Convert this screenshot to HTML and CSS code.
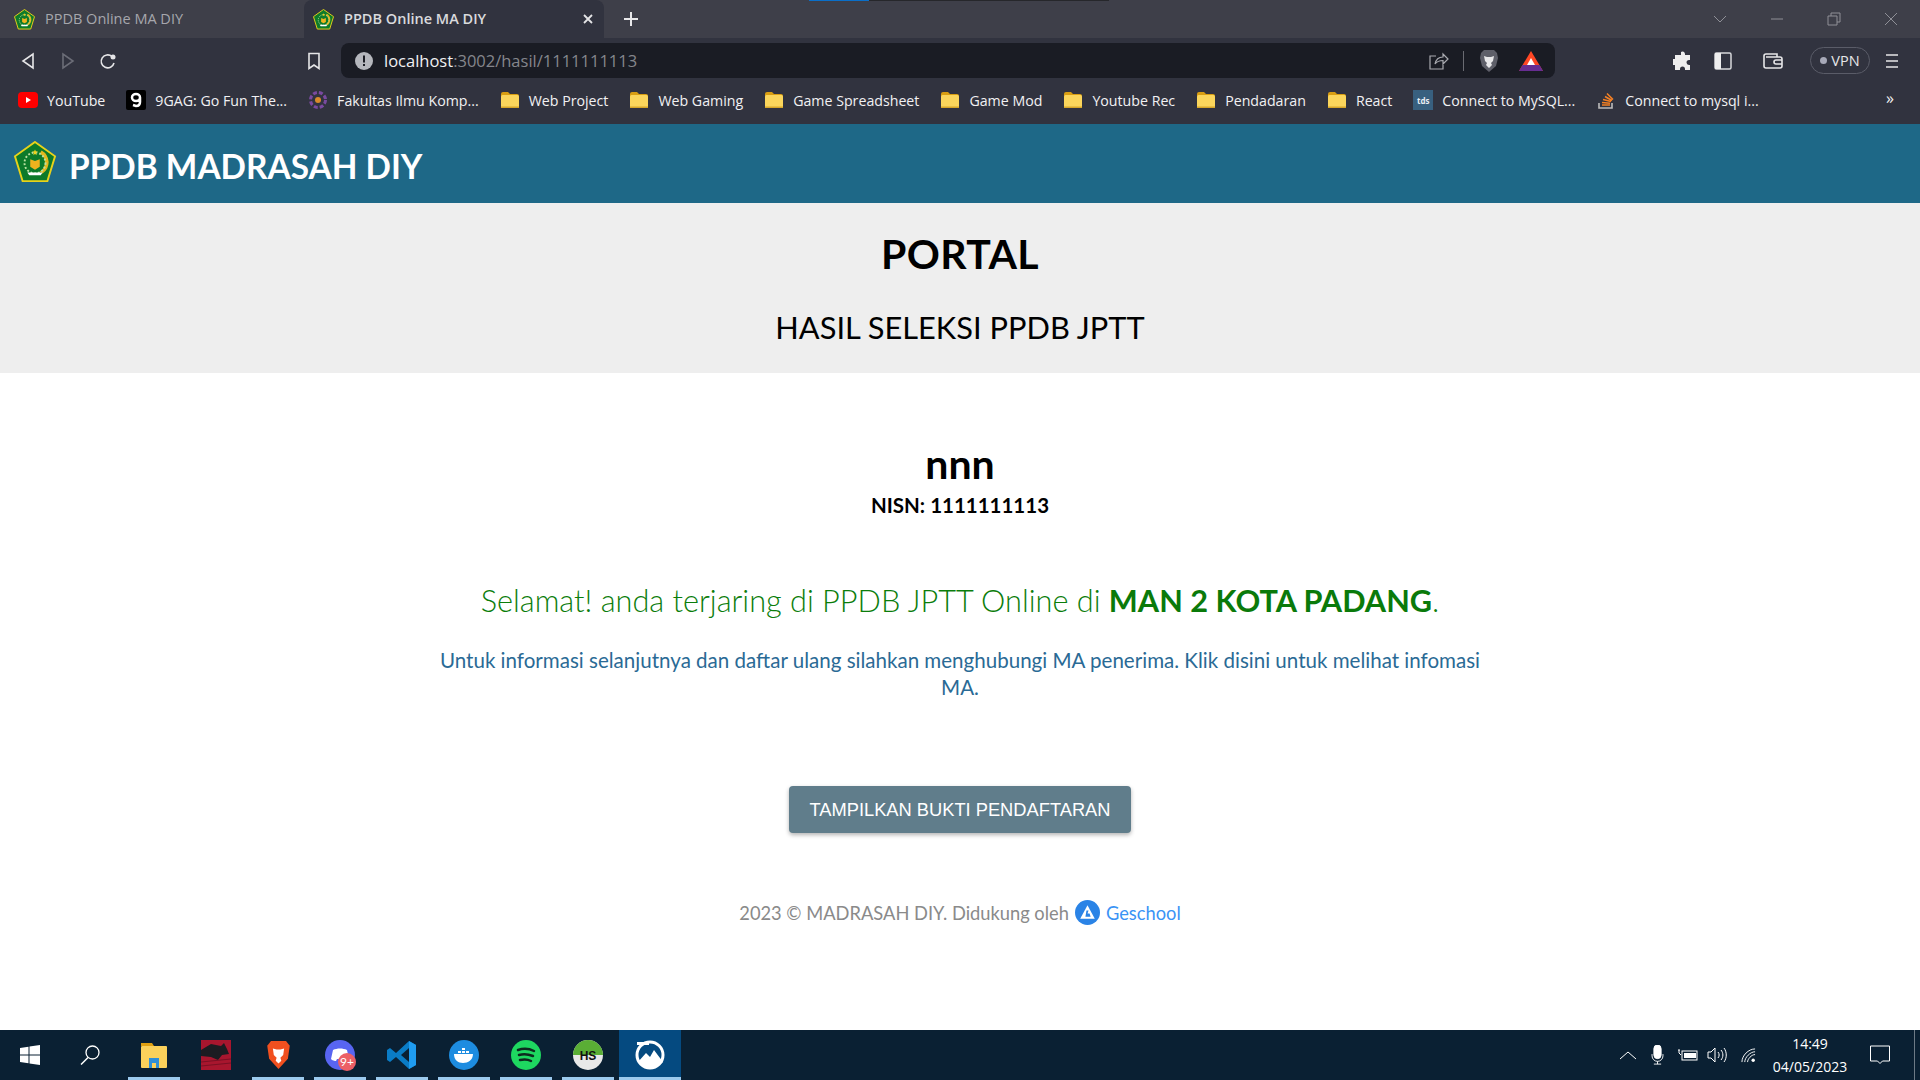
FILE: index.html
```html
<!DOCTYPE html>
<html>
<head>
	<title>PPDB Online MA DIY</title>
	<meta charset="utf-8">
	<link rel="stylesheet" href="styles.css">
</head>
<body>
	<svg class="defs" width="0" height="0">
		<symbol id="kemenag" viewBox="0 0 44 44">
			<path d="M22 1 43 16 35 42H9L1 16Z" fill="#0d7a2a" stroke="#e8d21a" stroke-width="2"/>
			<path d="M29 10a14 14 0 0 1 1 24l-3-2a11 11 0 0 0 0-19Z" fill="#e3b71c"/>
			<circle cx="22" cy="23" r="11" fill="none" stroke="#b9e0a0" stroke-width="2" stroke-dasharray="2 2"/>
			<path d="M17 19l5 2 5-2v8l-5 3-5-3Z" fill="#efb31e"/>
			<path d="M14 33h16l-2 3H16Z" fill="#fff"/>
			<path d="M22 9l1 2h2l-2 1.500 1 2.500-2-1.500-2 1.500 1-2.500-2-1.500h2Z" fill="#f2d21a"/>
		</symbol>
		<symbol id="folder" viewBox="0 0 20 18">
			<path d="M1 3a2 2 0 0 1 2-2h5l2 2h7a2 2 0 0 1 2 2v2H1Z" fill="#d99e12"/>
			<rect x="1" y="4" width="18" height="13" rx="1.500" fill="#fbd65c"/>
			<rect x="1" y="15.500" width="18" height="1.500" fill="#d8a72a"/>
		</symbol>
	</svg>

	<div class="tabstrip">
		<div class="tab">
			<svg class="fav"><use href="#kemenag"/></svg>
			<span>PPDB Online MA DIY</span>
		</div>
		<div class="tab tab-on">
			<svg class="fav"><use href="#kemenag"/></svg>
			<span>PPDB Online MA DIY</span>
			<svg class="tab-x" viewBox="0 0 12 12"><path d="M2 2l8 8M10 2l-8 8"/></svg>
		</div>
		<svg class="tab-new" viewBox="0 0 16 16"><path d="M8 1v14M1 8h14"/></svg>
		<div class="win-btns">
			<svg viewBox="0 0 14 8" class="win-a"><path d="M1 1l6 6 6-6"/></svg>
			<svg viewBox="0 0 14 14" class="win-b"><path d="M1 7h12"/></svg>
			<svg viewBox="0 0 14 14" class="win-c"><path d="M1 4h9v9H1ZM4 4V1h9v9h-3"/></svg>
			<svg viewBox="0 0 14 14" class="win-d"><path d="M1 1l12 12M13 1L1 13"/></svg>
		</div>
		<div class="loadbar"><i></i></div>
	</div>

	<div class="toolbar">
		<svg class="tb-back" viewBox="0 0 14 18"><path d="M12 2v14L2 9Z"/></svg>
		<svg class="tb-fwd" viewBox="0 0 14 18"><path d="M2 2v14l10-7Z"/></svg>
		<svg class="tb-reload" viewBox="0 0 18 18"><path d="M15 11a6.500 6.500 0 1 1-2-6.500"/><circle cx="14" cy="5" r="2.500" class="solid"/></svg>
		<svg class="tb-mark" viewBox="0 0 14 18"><path d="M2 1.500h10v15l-5-3.500-5 3.500Z"/></svg>
		<div class="urlbar">
			<svg class="url-info" viewBox="0 0 18 18"><circle cx="9" cy="9" r="9" fill="#b5b7bd"/><rect x="8" y="3.500" width="2" height="7" fill="#1a1c24"/><rect x="8" y="12" width="2" height="2" fill="#1a1c24"/></svg>
			<div class="url-text">localhost<span>:3002/hasil/1111111113</span></div>
			<svg class="url-share" viewBox="0 0 20 18"><path d="M7 4H1v13h13v-4M6 12c1-5 4-7 8-7V2l5 5-5 5V8.500c-3 0-6 1-8 3.500Z"/></svg>
			<i class="url-sep"></i>
			<svg class="url-brave" viewBox="0 0 20 24"><path d="M5 1h10l3 3 1 5-2 8-7 6-7-6-2-8 1-5Z" fill="#5e5f69"/><path d="M5 7l3 1h4l3-1-1 5-2 2 1 2-3 3-3-3 1-2-2-2Z" fill="#e8e8ea"/></svg>
			<svg class="url-bat" viewBox="0 0 24 20"><path d="M12 0 24 20H0Z" fill="#ff4724"/><path d="M0 20l3.500-6h17l3.500 6Z" fill="#662d91"/><path d="M12 7l4 7H8Z" fill="#fff"/></svg>
		</div>
		<svg class="tb-ext" viewBox="0 0 20 20"><path d="M8 1a2.500 2.500 0 0 1 4 2v1h5v5h-1a2.500 2.500 0 0 0 0 5h1v5H12v-1a2.500 2.500 0 0 0-5 0v1H2v-5H1a3 3 0 0 1 0-6h1V4h6Z" fill="#eee"/></svg>
		<svg class="tb-side" viewBox="0 0 18 18"><rect x="1" y="1" width="16" height="16" rx="1.500" fill="none" stroke="#d8d9dc" stroke-width="1.500"/><rect x="1" y="1" width="6" height="16" fill="#eee"/></svg>
		<svg class="tb-wallet" viewBox="0 0 20 16"><path d="M3 4h14a2 2 0 0 1 2 2v7a2 2 0 0 1-2 2H3a2 2 0 0 1-2-2V3a2 2 0 0 1 2-2h11v3M19 7h-6a2 2 0 0 0 0 4h6"/></svg>
		<div class="vpn"><i></i>VPN</div>
		<svg class="tb-menu" viewBox="0 0 12 16"><path d="M0 2h12M0 8h12M0 14h12"/></svg>
	</div>

	<div class="bookmarks">
		<div class="bm"><svg class="bm-ico" viewBox="0 0 20 16"><rect width="20" height="16" y="0" rx="4" fill="#f00"/><path d="M8 5l5 3-5 3Z" fill="#fff"/></svg>YouTube</div>
		<div class="bm"><svg class="bm-ico" viewBox="0 0 20 20"><rect width="20" height="20" rx="2" fill="#000"/><path d="M6 7.500a4 3.500 0 1 1 8 0V12c0 3-2 4-4 4l-3-1M6 7.500a4 3.500 0 0 0 8 0" fill="none" stroke="#fff" stroke-width="2.500"/></svg>9GAG: Go Fun The...</div>
		<div class="bm"><svg class="bm-ico" viewBox="0 0 20 20"><circle cx="10" cy="10" r="7.500" fill="none" stroke="#7a4aa0" stroke-width="3" stroke-dasharray="4 2"/><circle cx="10" cy="10" r="3" fill="#d98a2b"/></svg>Fakultas Ilmu Komp...</div>
		<div class="bm"><svg class="bm-ico"><use href="#folder"/></svg>Web Project</div>
		<div class="bm"><svg class="bm-ico"><use href="#folder"/></svg>Web Gaming</div>
		<div class="bm"><svg class="bm-ico"><use href="#folder"/></svg>Game Spreadsheet</div>
		<div class="bm"><svg class="bm-ico"><use href="#folder"/></svg>Game Mod</div>
		<div class="bm"><svg class="bm-ico"><use href="#folder"/></svg>Youtube Rec</div>
		<div class="bm"><svg class="bm-ico"><use href="#folder"/></svg>Pendadaran</div>
		<div class="bm"><svg class="bm-ico"><use href="#folder"/></svg>React</div>
		<div class="bm"><span class="bm-tds">tds</span>Connect to MySQL...</div>
		<div class="bm"><svg class="bm-ico" viewBox="0 0 20 20"><path d="M3 13v5h13v-5" fill="none" stroke="#bcbbbb" stroke-width="1.600"/><path d="M6 15h8M6 12.500l8 .7M7 9.500l8 2M9 6.500l7 4M11 3.500l6 6" stroke="#f48024" stroke-width="1.600" fill="none"/></svg>Connect to mysql i...</div>
		<div class="bm-more">»</div>
	</div>

	<div class="appbar">
		<svg class="appbar-logo"><use href="#kemenag"/></svg>
		<div class="appbar-title">PPDB MADRASAH DIY</div>
	</div>

	<div class="hero">
		<h1>PORTAL</h1>
		<p>HASIL SELEKSI PPDB JPTT</p>
	</div>

	<div class="result">
		<h2>nnn</h2>
		<div class="nisn">NISN: 1111111113</div>
		<div class="congrats">Selamat! anda terjaring di PPDB JPTT Online di <b>MAN 2 KOTA PADANG</b>.</div>
		<div class="info">Untuk informasi selanjutnya dan daftar ulang silahkan menghubungi MA penerima. Klik disini untuk melihat infomasi MA.</div>
		<button class="proof">TAMPILKAN BUKTI PENDAFTARAN</button>
		<div class="foot">
			2023 © MADRASAH DIY. Didukung oleh
			<svg class="foot-logo" viewBox="0 0 24 24"><circle cx="12" cy="12" r="12" fill="#2a83e6"/><path d="M12 5 19 18H5Z" fill="#fff"/><path d="M11 10h2l-1 3h2l1 3H10Z" fill="#2a83e6"/></svg>
			<a href="#">Geschool</a>
		</div>
	</div>

	<div class="taskbar">
		<div class="task-start"><svg viewBox="0 0 20 20" width="20" height="20"><path d="M0 3l8.500-1.200v7.700H0ZM9.500 1.600 20 0v9.500H9.500ZM0 10.500h8.500v7.700L0 17ZM9.500 10.500H20V20L9.500 18.400Z" fill="#fff"/></svg></div>
		<div class="task-search"><svg viewBox="0 0 20 20" width="20" height="20"><circle cx="12.500" cy="7.500" r="6.500" fill="none" stroke="#fff" stroke-width="1.300"/><path d="M8 12.500 1 19.500" stroke="#fff" stroke-width="1.500"/></svg></div>

		<div class="task-app used"><svg viewBox="0 0 28 30" width="28" height="30"><path d="M1 3h11l2 3H1Z" fill="#e0a012"/><rect x="1" y="6" width="26" height="22" rx="1" fill="#fbd15b"/><path d="M9 28V18h10v10h-3v-5h-4v5Z" fill="#2f8fd8"/></svg></div>
		<div class="task-app"><svg viewBox="0 0 30 30" width="30" height="30"><rect width="30" height="30" fill="#a8162e"/><path d="M0 10 10 4l10 2 3-3 3 6 2 5-7 1-4 5-7-3-10-1Z" fill="#1c1c22"/><path d="M0 22 30 19M0 26l30-3" stroke="#7a1024" stroke-width="1"/></svg></div>
		<div class="task-app used"><svg viewBox="0 0 26 32" width="25" height="30"><path d="M5 1h16l4 5-2 14-10 11L3 20 1 6Z" fill="#f1501f"/><path d="M7 9l4 1h4l4-1-1 7-3 3 1 3-3 3-3-3 1-3-3-3Z" fill="#fff"/></svg></div>
		<div class="task-app used task-badged">
			<svg viewBox="0 0 30 30" width="30" height="30"><circle cx="15" cy="15" r="15" fill="#5865f2"/><path d="M8 10c4-2 10-2 14 0l2 9c-2 2-5 2-5 2l-1-2H12l-1 2s-3 0-5-2Z" fill="#fff"/></svg>
			<span class="badge">9+</span>
		</div>
		<div class="task-app used"><svg viewBox="0 0 30 30" width="30" height="30"><path d="M22 1 29 5V25L22 29 9 17 3 22 0 20V10L3 8 9 13Z" fill="#0a7cc6"/><path d="M22 8 14 15l8 7Z" fill="#0a2033"/><path d="M22 1 29 5V25L22 29Z" fill="#1f9cf0"/></svg></div>
		<div class="task-app used"><svg viewBox="0 0 30 30" width="30" height="30"><circle cx="15" cy="15" r="15" fill="#1d8ce0"/><path d="M5 14h19c0 6-5 9-10 9-5 0-9-3-9-9Z" fill="#fff"/><path d="M9 11h3v2H9ZM13 11h3v2h-3ZM13 8h3v2h-3ZM17 11h3v2h-3Z" fill="#fff"/></svg></div>
		<div class="task-app used"><svg viewBox="0 0 30 30" width="30" height="30"><circle cx="15" cy="15" r="15" fill="#1ed760"/><path d="M7 10c6-2 11-1.500 16 1M8 15c5-1.500 9-1 14 1M9 20c4-1 8-.7 11 1" stroke="#0d2a1e" stroke-width="2.500" fill="none" stroke-linecap="round"/></svg></div>
		<div class="task-app used"><svg viewBox="0 0 30 30" width="30" height="30"><circle cx="15" cy="15" r="15" fill="#e8e8e8"/><path d="M0 15a15 15 0 0 1 30 0Z" fill="#5aae35"/><text x="15" y="20" class="hs-mark">HS</text></svg></div>
		<div class="task-app task-on used"><svg viewBox="0 0 30 30" width="30" height="30"><circle cx="15" cy="15" r="13" fill="none" stroke="#fff" stroke-width="3"/><path d="M3 22 11 13l4 4 4-7 9 12-6 5H8Z" fill="#fff"/><path d="M2 2h12v3H2Z" fill="#fff"/></svg></div>

		<div class="tray">
			<svg viewBox="0 0 16 9" class="tr-up"><path d="M0 8l8-7 8 7"/></svg>
			<svg viewBox="0 0 14 22" class="tr-mic"><rect x="3" y="0" width="8" height="15" rx="4" fill="#fff"/><path d="M1 10v2a6 6 0 0 0 12 0v-2M7 18v3M3 21h8"/></svg>
			<svg viewBox="0 0 20 12" class="tr-bat"><path d="M0 1h2M1 1v3l2 2"/><rect x="4" y="2" width="15" height="9"/><rect x="6" y="4" width="12" height="5" fill="#fff" stroke="none"/></svg>
			<svg viewBox="0 0 20 16" class="tr-vol"><path d="M1 5h3l4-4v14l-4-4H1ZM11 5c1.500 2 1.500 4 0 6M14 3c2.500 3 2.500 7 0 10M17 1c3 4 3 10 0 14"/></svg>
			<svg viewBox="0 0 16 16" class="tr-wifi"><path d="M1 15C1 8 8 1 15 1M4 15c0-5 6-11 11-11M7 15c0-3 4-8 8-8"/><circle cx="13" cy="13" r="1.800" fill="#fff" stroke="none"/></svg>
			<div class="clock"><div>14:49</div><div>04/05/2023</div></div>
			<svg viewBox="0 0 20 20" class="tr-note"><path d="M.500 1h19v15h-7l-2.500 2.500L7.500 16h-7Z"/></svg>
		</div>
	</div>
</body>
</html>
```

FILE: styles.css
```css
*{ margin:0; padding:0; box-sizing:border-box; }
html,body{ width:1920px; height:1080px; overflow:hidden; }
body{
	background:#fff;
	display:flex;
	flex-direction:column;
	font-family:"Lato","Noto Sans",sans-serif;
}
.defs{ position:absolute; }
svg{ flex:none; display:block; }

/* tabs */
.tabstrip{
	height:38px;
	background:#3e3f49;
	display:flex;
	align-items:stretch;
	position:relative;
	font-family:"Open Sans",sans-serif;
	font-size:14.500px;
}
.tab{
	width:304px;
	display:flex;
	align-items:center;
	padding-left:14px;
	gap:10px;
	color:#a6a7ad;
}
.tab span{ margin-top:-1px; }
.tab-on{
	width:300px;
	padding-left:9px;
	background:#31333f;
	color:#d9dadd;
	font-weight:600;
	border-radius:8px 8px 0 0;
}
.fav{ width:21px; height:21px; }
.tab-x{ width:12px; height:12px; margin-left:auto; margin-right:10px; fill:none; stroke:#e4e4e6; stroke-width:1.800; }
.tab-new{ width:16px; height:16px; margin:11px 0 0 19px; fill:none; stroke:#e8e8ea; stroke-width:2; }
.win-btns{
	margin-left:auto;
	display:flex;
	align-items:center;
	padding-right:22px;
	gap:43px;
}
.win-btns svg{ fill:none; stroke:#8f9097; stroke-width:1; width:14px; height:14px; }
.loadbar{
	position:absolute;
	left:809px;
	top:0;
	width:300px;
	height:1px;
	background:#26272b;
}
.loadbar i{ display:block; width:60px; height:1px; background:#0a6fc9; }

/* toolbar */
.toolbar{
	height:40px;
	padding-top:5px;
	background:#31333f;
	display:flex;
	align-items:center;
}
.toolbar svg{ fill:none; stroke:#e6e6e8; stroke-width:1.600; }
.tb-back{ width:14px; height:18px; margin-left:21px; }
.tb-fwd{ width:14px; height:18px; margin-left:26px; stroke:#6b6d77 !important; }
.tb-reload{ width:18px; height:18px; margin-left:24px; }
.tb-reload .solid{ fill:#e6e6e8; stroke:none; }
.tb-mark{ width:14px; height:18px; margin-left:190px; }
.urlbar{
	width:1214px;
	height:35px;
	margin-left:20px;
	background:#1a1c24;
	border-radius:8px;
	display:flex;
	align-items:center;
	padding-left:14px;
}
.toolbar .urlbar .url-info{ width:18px; height:18px; stroke:none; }
.url-text{
	margin-left:11px;
	font-family:"Open Sans",sans-serif;
	font-size:16.500px;
	color:#f0f0f2;
}
.url-text span{ color:#85868c; }
.toolbar .url-share{ width:20px; height:18px; margin-left:auto; stroke:#a9aab0; stroke-width:1.200; }
.url-sep{ width:1px; height:20px; background:#6a6b72; margin:0 15px 0 14px; }
.toolbar .url-brave{ width:20px; height:24px; stroke:none; }
.toolbar .url-bat{ width:24px; height:20px; margin-left:20px; margin-right:12px; stroke:none; }
.toolbar .tb-ext{ width:20px; height:20px; margin-left:118px; stroke:none; }
.toolbar .tb-side{ width:18px; height:18px; margin-left:21px; stroke:none; }
.tb-wallet{ width:20px; height:16px; margin-left:31px; }
.vpn{
	width:60px;
	height:27px;
	margin-left:27px;
	border:1px solid #5a5c68;
	border-radius:14px;
	display:flex;
	align-items:center;
	justify-content:center;
	gap:4px;
	font-family:"Open Sans",sans-serif;
	font-size:14.500px;
	color:#e6e6e8;
}
.vpn i{ width:7px; height:7px; border-radius:50%; background:#a7a9b8; }
.tb-menu{ width:12px; height:16px; margin-left:16px; }

/* bookmarks */
.bookmarks{
	height:46px;
	background:#31333f;
	display:flex;
	align-items:center;
	padding:0 0 2px 18px;
	gap:21px;
	font-family:"Open Sans",sans-serif;
	font-size:14.200px;
	color:#f1f1f3;
	position:relative;
}
.bm{ display:flex; align-items:center; gap:9px; white-space:nowrap; }
.bm-ico{ width:20px; height:20px; }
.bm-tds{
	width:20px;
	height:20px;
	background:#38607f;
	color:#e8eef3;
	font-size:8px;
	font-weight:700;
	display:flex;
	align-items:center;
	justify-content:center;
}
.bm-more{ position:absolute; left:1886px; top:9px; font-size:16px; }

/* app header */
.appbar{
	height:79px;
	background:#1e6887;
	display:flex;
	align-items:center;
	padding-left:13px;
	gap:12px;
}
.appbar-logo{ width:44px; height:42px; margin-top:-4px; }
.appbar-title{
	color:#fff;
	font-size:33.400px;
	font-weight:700;
	margin-top:4px;
}

.hero{
	height:170px;
	background:#eee;
	text-align:center;
	color:#000;
	padding-top:24px;
}
.hero h1{ font-size:41px; font-weight:700; letter-spacing:.4px; line-height:54px; }
.hero p{ font-size:30.800px; line-height:44px; margin-top:25px; }

/* result */
.result{
	flex:1;
	display:flex;
	flex-direction:column;
	align-items:center;
	text-align:center;
	padding-top:65px;
}
.result h2{ font-size:41px; font-weight:700; line-height:52px; color:#000; }
.nisn{ font-size:20.500px; font-weight:700; line-height:27px; margin-top:2px; color:#000; }
.congrats{
	font-size:30.700px;
	font-weight:300;
	color:#0b7d0b;
	line-height:44px;
	margin-top:60px;
}
.congrats b{ font-weight:700; color:#0a7a0a; }
.info{
	width:1060px;
	font-size:20.550px;
	line-height:27px;
	color:#2a6a95;
	margin-top:24px;
}
.proof{
	width:342px;
	height:47px;
	margin-top:85px;
	background:#607d8b;
	color:#fff;
	border:0;
	border-radius:4px;
	font-family:"Liberation Sans",sans-serif;
	font-size:18.300px;
	box-shadow:0 2px 4px rgba(0,0,0,.3);
}
.foot{
	display:flex;
	align-items:center;
	gap:6px;
	margin-top:67px;
	font-size:18.300px;
	color:#8a8a8a;
}
.foot-logo{ width:25px; height:25px; }
.foot a{ color:#3b93f5; text-decoration:none; }

/* windows taskbar */
.taskbar{
	height:50px;
	background:#0a2033;
	display:flex;
	align-items:stretch;
}
.task-start{ width:60px; display:flex; align-items:center; justify-content:center; }
.task-search{ width:63px; display:flex; align-items:center; justify-content:center; padding-right:4px; }
.task-app{
	width:62px;
	display:flex;
	align-items:center;
	justify-content:center;
	position:relative;
}
.task-app.used::after{
	content:"";
	position:absolute;
	left:5px;
	right:5px;
	bottom:0;
	height:3px;
	background:#9ccaee;
}
.task-on{ background:#054a80; }
.task-on.used::after{ left:0; right:0; }
.badge{
	position:absolute;
	left:29px;
	top:23px;
	width:18px;
	height:18px;
	border-radius:50%;
	background:#ec5f66;
	color:#fff;
	font-size:12px;
	line-height:18px;
	text-align:center;
}
.hs-mark{ font-family:"Liberation Sans",sans-serif; font-size:12px; font-weight:700; fill:#111; text-anchor:middle; }
.tray{
	margin-left:auto;
	display:flex;
	align-items:center;
	color:#fff;
	border-right:1px solid #6d7a86;
	margin-right:5px;
	padding-right:24px;
}
.tray svg{ fill:none; stroke:#fff; stroke-width:1; }
.tr-up{ width:16px; height:9px; }
.tr-mic{ width:13px; height:20px; margin-left:15px; }
.tr-bat{ width:20px; height:12px; margin-left:14px; }
.tr-vol{ width:20px; height:16px; margin-left:9px; }
.tr-wifi{ width:15px; height:15px; margin-left:14px; }
.clock{
	width:100px;
	margin-left:4px;
	text-align:center;
	font-family:"Open Sans",sans-serif;
	font-size:14px;
	line-height:23px;
}
.tr-note{ width:20px; height:20px; margin-left:10px; }
```
